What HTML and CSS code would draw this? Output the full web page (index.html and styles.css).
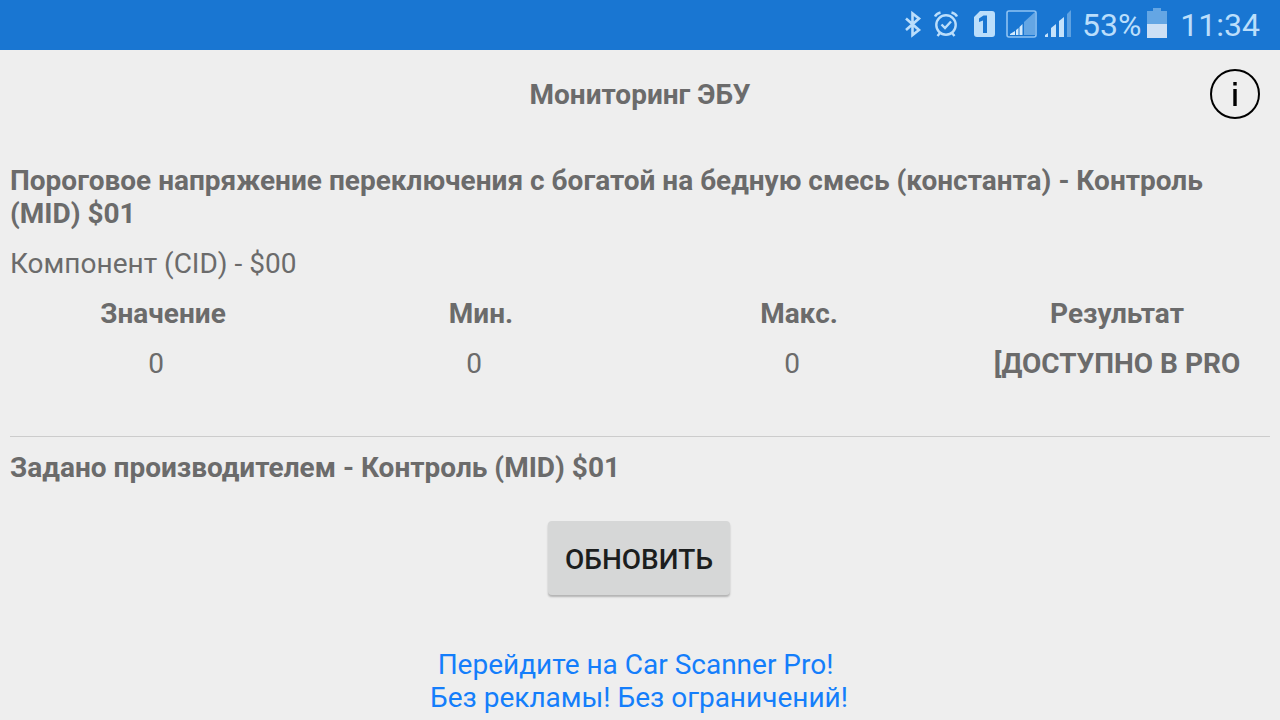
FILE: index.html
```html
<!DOCTYPE html>
<html lang="ru">
<head>
    <meta charset="UTF-8">
    <meta name="viewport" content="width=device-width, initial-scale=1.0">
    <title>Мониторинг ЭБУ</title>
    <link rel="stylesheet" href="styles.css">
</head>
<body>
    <div class="status-bar">
        <svg class="status-icons" width="176" height="50" viewBox="0 0 176 50" aria-hidden="true">
            <!-- bluetooth -->
            <path d="M5 18.5L18 30L11.5 35V13.500L18 18.500L5 30" fill="none" stroke="#bbdefb" stroke-width="2.6"/>
            <!-- alarm -->
            <g fill="none" stroke="#bbdefb" stroke-width="2.4">
                <circle cx="45" cy="25" r="9.7"/>
                <path d="M40.5 24.5L44 28L50 21.5M34 16.5Q35.5 13.5 39.5 12.5M56 16.5Q54.5 13.5 50.5 12.5M39 33L36.5 36M51 33L53.5 36"/>
            </g>
            <!-- sim 1 -->
            <path fill-rule="evenodd" fill="#bbdefb" d="M79 11H91Q94 11 94 14V34Q94 37 91 37H76Q73 37 73 34V17ZM82.5 15.500L78 18.5V22L82 20.500V33H86V15.500Z"/>
            <!-- framed signal -->
            <rect x="106" y="11" width="29" height="26" rx="2" fill="none" stroke="#8fc3f3" stroke-width="1.6"/>
            <path d="M123 22L134 12V35H123Z" fill="#64a6e4"/>
            <path d="M109 35V34L114 31V35ZM115 35V30L117.5 28V35ZM118.5 35V27L121.5 24V35Z" fill="#d3eafc"/>
            <!-- signal -->
            <path d="M166 14L170 10V37H166Z" fill="#5fa2e2"/>
            <path d="M144 37V35L147 33V37ZM150 37V28L155 24V37ZM158 37V21L163 17V37Z" fill="#c5e2fb"/>
        </svg>
        <span class="battery-level">53%</span>
        <svg class="battery" width="20" height="30" viewBox="0 0 20 30" aria-hidden="true">
            <path d="M6 0H14V3H20V16H0V3H6Z" fill="#64a6e4"/>
            <path d="M0 16H20V30H0Z" fill="#cde0f5"/>
        </svg>
        <time class="clock">11:34</time>
    </div>

    <header class="header">
        <h1 class="title">Мониторинг ЭБУ</h1>
        <button class="info" type="button" aria-label="Информация">
            <svg width="50" height="50" viewBox="0 0 50 50" aria-hidden="true">
                <circle cx="25" cy="25" r="24" fill="none" stroke="#000" stroke-width="2"/>
                <path d="M23.3 13H26.7V16.5H23.3ZM23.3 20H26.7V37H23.3Z"/>
            </svg>
        </button>
    </header>

    <main class="content">
        <section class="monitor">
            <h2 class="monitor-name">Пороговое напряжение переключения с богатой на бедную смесь (константа) - Контроль (MID) $01</h2>
            <p class="component">Компонент (CID) - $00</p>
            <table class="values">
                <thead>
                    <tr>
                        <th>Значение</th>
                        <th>Мин.</th>
                        <th>Макс.</th>
                        <th>Результат</th>
                    </tr>
                </thead>
                <tbody>
                    <tr>
                        <td>0&nbsp;&nbsp;</td>
                        <td>0&nbsp;&nbsp;</td>
                        <td>0&nbsp;&nbsp;</td>
                        <td class="result">[ДОСТУПНО В PRO</td>
                    </tr>
                </tbody>
            </table>
        </section>
        <section class="monitor">
            <h2 class="monitor-name">Задано производителем - Контроль (MID) $01</h2>
        </section>
    </main>

    <footer class="footer">
        <button class="refresh" type="button">ОБНОВИТЬ</button>
        <a class="pro-link" href="#">Перейдите на Car Scanner Pro!&nbsp;<br>Без рекламы! Без ограничений!</a>
    </footer>
</body>
</html>
```
FILE: styles.css
```css
body {
    margin: 0;
    background: #eeeeee;
    color: #6b6b6b;
    font-family: Roboto, Arial, sans-serif;
    font-size: 28px;
    line-height: 33px;
}

h1, h2, p {
    margin: 0;
    font-size: 28px;
}

button {
    font-family: inherit;
    cursor: pointer;
}

.status-bar {
    display: flex;
    align-items: center;
    justify-content: flex-end;
    height: 50px;
    padding-right: 20px;
    background: #1976d2;
    color: #bbdefb;
    font-size: 32px;
}

.battery-level {
    margin: 0 6px 0 5px;
}

.battery {
    margin-bottom: 4px;
}

.clock {
    margin-left: 13px;
}

.header {
    display: grid;
    grid-template-columns: 1fr auto 1fr;
    align-items: center;
    padding: 19px 20px;
}

.title {
    grid-column: 2;
}

.info {
    justify-self: end;
    padding: 0;
    border: none;
    background: none;
}

.info svg {
    display: block;
}

.content {
    padding: 26px 10px 0;
}

.monitor + .monitor {
    margin-top: 56px;
    padding-top: 14px;
    border-top: 1px solid #cccccc;
}

.component {
    margin-top: 17px;
}

.values {
    table-layout: fixed;
    width: calc(100% + 24px);
    margin: 17px -12px 0;
    border-spacing: 12px 0;
    text-align: center;
}

.values th,
.values td {
    padding: 0;
    white-space: nowrap;
}

.values td {
    padding-top: 17px;
}

.values .result {
    font-weight: bold;
}

.footer {
    display: flex;
    flex-direction: column;
    align-items: center;
    padding: 37px 2px 6px 0;
}

.refresh {
    padding: 22px 17px 19px;
    border: none;
    border-radius: 4px;
    background: #d6d7d7;
    box-shadow: 0 2px 2px rgba(0, 0, 0, 0.25);
    color: #1c1e1e;
    font-size: 28px;
    font-weight: 500;
    line-height: 33px;
}

.pro-link {
    margin-top: 53px;
    color: #147efb;
    text-align: center;
    text-decoration: none;
}
```
